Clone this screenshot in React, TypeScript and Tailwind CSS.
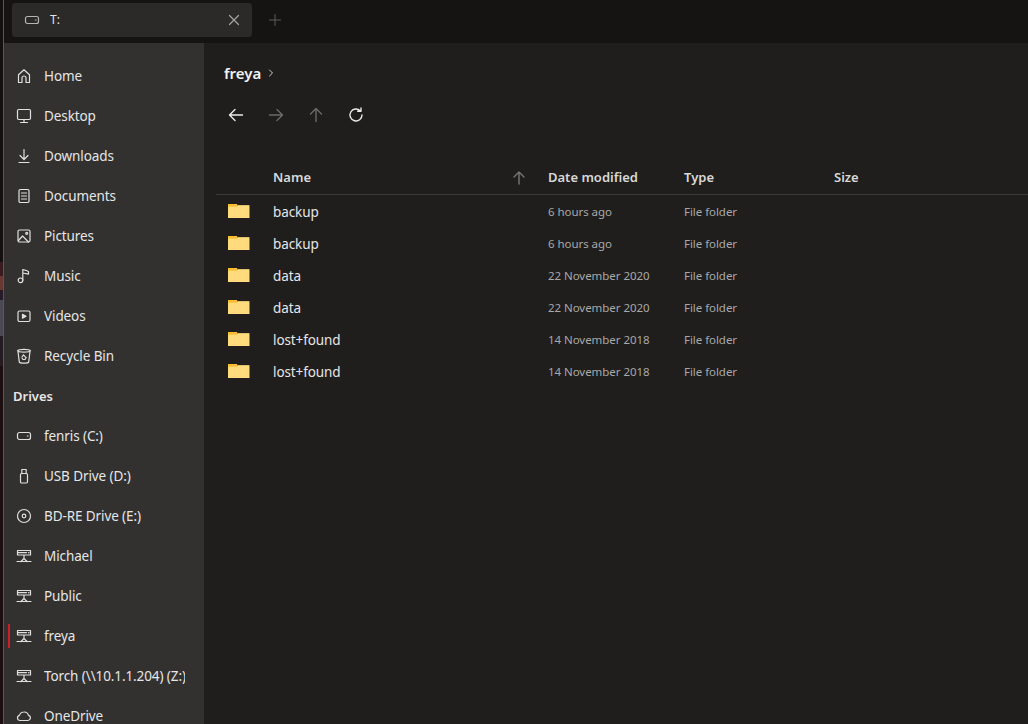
import React from "react";

const ic = { fill: "none", stroke: "currentColor", strokeWidth: 1.2, strokeLinecap: "round" as const, strokeLinejoin: "round" as const };
const S = ({ children }: { children: React.ReactNode }) => (
  <svg width="16" height="16" viewBox="0 0 16 16" {...ic}>{children}</svg>
);
const Home = () => <S><path d="M2.500 14.500V6.800L8 1.800l5.500 5v7.700h-3.500V10a2 2 0 0 0-4 0v4.500z" /></S>;
const Desktop = () => <S><rect x="1.500" y="1.500" width="13" height="10" rx="1.200" /><path d="M8 11.500v3M4.500 14.500h7" /></S>;
const Download = () => <S><path d="M8 1.500v9.500M4 7.500 8 11.500l4-4M3 14.500h10" /></S>;
const Doc = () => <S><rect x="3" y="1.500" width="10" height="13" rx="1.200" /><path d="M5.500 5h5M5.500 8h5M5.500 11h5" /></S>;
const Pic = () => <S><rect x="2" y="2" width="12" height="12" rx="1.500" /><path d="m2.500 12.500 4-4.500 6 6" /><circle cx="10.700" cy="5.300" r="1" /></S>;
const Music = () => <S><circle cx="4.500" cy="12.300" r="2.300" /><path d="M6.800 12.300V1.600c2 .3 4.700 1 5.700 2v2.500L6.800 5" /></S>;
const Video = () => <S><rect x="2" y="3" width="12" height="10.500" rx="1.500" /><path d="M6.500 6.300v3.900L10 8.200z" fill="currentColor" /></S>;
const Bin = () => <S><path d="M1.500 2.800c1-2 12-2 13 0-1 1.700-12 1.700-13 0zM2 3.500l1.300 10.500c.4 1.500 9 1.500 9.400 0L14 3.500" /><path d="M6 9l1.500-2.200L9.300 8.800M6 10l1 1.500h2l1.200-2" /></S>;
const Hdd = () => <S><rect x="1.500" y="4.500" width="13" height="7" rx="2" /><path d="M11.300 8h.8" /></S>;
const Usb = () => <S><rect x="4.500" y="5.500" width="7" height="9.500" rx="1.200" /><path d="M5.800 5.500V1.500h4.400v4" /></S>;
const Disc = () => <S><circle cx="8" cy="8" r="6.500" /><circle cx="8" cy="8" r="1.800" /></S>;
const Net = () => <S><path d="M1.500 2.500h13v4.500h-13zM1.500 4.700h9M8 7v3.500M1 13.500h14M5 13.500l3-3 3 3" /><path d="M12.500 4.700h.5" /></S>;
const Cloud = () => <S><path d="M4 12.500a2.600 2.600 0 0 1-.6-5.100A4.800 4.800 0 0 1 8 4a4.500 4.500 0 0 1 4.500 3.400 2.600 2.600 0 0 1-.5 5.100z" /></S>;
const Arrow = ({ d, className }: { d: string; className: string }) => (
  <svg width="16" height="16" viewBox="0 0 16 16" className={className} {...ic} strokeWidth={1.4}><path d={d} /></svg>
);
const Folder = () => (
  <svg width="22" height="14" viewBox="0 0 22 14" className="block">
    <path d="M0 0h9l1 1.200h12V14H0z" fill="#8f7a3f" />
    <path d="M0 2h21v12H0z" fill="#ffdb7d" />
    <path d="M9.500 1.200H21V3H9.500z" fill="#ffdb7d" />
    <path d="M0 0h9v2.600H0z" fill="#fbbd2d" />
  </svg>
);

const nav = [
  ["Home", Home], ["Desktop", Desktop], ["Downloads", Download], ["Documents", Doc],
  ["Pictures", Pic], ["Music", Music], ["Videos", Video], ["Recycle Bin", Bin],
] as const;
const drives = [
  ["fenris (C:)", Hdd], ["USB Drive (D:)", Usb], ["BD-RE Drive (E:)", Disc], ["Michael", Net],
  ["Public", Net], ["freya", Net], ["Torch (\\\\10.1.1.204) (Z:)", Net], ["OneDrive", Cloud],
] as const;
const rows = [
  ["backup", "6 hours ago"], ["backup", "6 hours ago"], ["data", "22 November 2020"],
  ["data", "22 November 2020"], ["lost+found", "14 November 2018"], ["lost+found", "14 November 2018"],
];
const Strip = () => (
  <div className="w-[3px] shrink-0 flex flex-col">
    <div className="h-[262px] bg-[#14100f]" />
    <div className="h-[14px] bg-[#3a1c20]" />
    <div className="h-[14px] bg-[#6a3832]" />
    <div className="h-[10px] bg-[#241a28]" />
    <div className="h-[36px] bg-[#4a4852]" />
    <div className="h-[30px] bg-[#241c22]" />
    <div className="flex-1 bg-[#1c0e10]" />
  </div>
);

const Item = ({ label, Icon, active }: { label: string; Icon: React.ComponentType; active?: boolean }) => (
  <div className="relative h-10 shrink-0 flex items-center pl-[12px] text-[13.5px] tracking-[-0.1px] text-[#e6e6e6]">
    {active && <span className="absolute left-[4px] top-[8px] h-6 w-[2px] bg-[#d01c2c]" />}
    <span className="text-[#e0e0e0] w-4 h-4 flex mr-[12px]"><Icon /></span>
    <span className="whitespace-nowrap overflow-hidden w-[141px]">{label}</span>
  </div>
);

export default function App() {
  return (
    <div className="w-[1028px] h-[724px] flex overflow-hidden bg-[#120c0c]" style={{ fontFamily: "'Noto Sans','Open Sans',sans-serif" }}>
      <Strip />
      <div className="w-px shrink-0 bg-[#c5263a]" />
      <div className="flex-1 flex flex-col min-w-0">
        <div className="h-[43px] shrink-0 bg-[#151413] flex items-start pl-[8px] pt-[3px]">
          <div className="w-[240px] h-[34px] rounded-[4px] bg-[#2b2a29] flex items-center pl-[12px] pr-[12px]">
            <span className="text-[#b5b5b5] w-4 h-4 flex"><Hdd /></span>
            <span className="ml-[10px] text-[12px] text-[#e4e4e4] flex-1">T:</span>
            <svg width="12" height="12" viewBox="0 0 12 12" className="text-[#a5a5a5]" {...ic}><path d="M1.500 1.500l9 9M10.500 1.500l-9 9" /></svg>
          </div>
          <svg width="12" height="12" viewBox="0 0 12 12" className="ml-[17px] mt-[11px] text-[#5d5d5d]" {...ic} strokeWidth={1}><path d="M6 .5v11M.5 6h11" /></svg>
        </div>
        <div className="flex-1 flex min-h-0">
          <div className="w-[200px] shrink-0 bg-[#323130] flex flex-col pt-[13px] overflow-hidden">
            {nav.map(([l, I]) => <Item key={l} label={l} Icon={I} />)}
            <div className="h-10 shrink-0 flex items-center pl-[9px] text-[13px] font-semibold text-[#e6e6e6] pt-px">Drives</div>
            {drives.map(([l, I]) => <Item key={l} label={l} Icon={I} active={l === "freya"} />)}
          </div>
          <div className="flex-1 bg-[#1f1e1d] min-w-0 pl-[12px]">
            <div className="flex items-center h-[16px] mt-[22px] pl-[8px] gap-[6px]">
              <span className="text-[15px] font-semibold text-[#f2f2f2]">freya</span>
              <svg width="8" height="10" viewBox="0 0 8 10" className="text-[#cfcfcf] -mt-px" {...ic} strokeWidth={1}><path d="M2.500 2 5.500 5 2.500 8" /></svg>
            </div>
            <div className="flex items-center gap-6 mt-[26px] pl-[12px] h-4">
              <Arrow className="text-[#ececec]" d="M14.500 8H1.500M7 2.500 1.500 8 7 13.500" />
              <Arrow className="text-[#6a6a6a]" d="M1.500 8h13M9 2.500 14.500 8 9 13.500" />
              <Arrow className="text-[#6a6a6a]" d="M8 14.500V1.500M2.500 7 8 1.500 13.500 7" />
              <Arrow className="text-[#ececec]" d="M14 8a6 6 0 1 1-1.800-4.300M13 1v3.300H9.700" />
            </div>
            <div className="flex items-center h-[36px] mt-[36px] pt-[2px] border-b border-[#3a3938] text-[13px] font-semibold text-[#d8d8d8]">
              <span className="w-[57px]" />
              <span className="w-[238px]">Name</span>
              <Arrow className="text-[#777777] mr-[21px]" d="M8 14V2M3 7l5-5 5 5" />
              <span className="w-[136px]">Date modified</span>
              <span className="w-[150px]">Type</span>
              <span>Size</span>
            </div>
            {rows.map(([n, d], i) => (
              <div key={i} className="flex items-center h-8 text-[11.5px] tracking-[-0.05px] text-[#a8a8a8]">
                <span className="w-[57px] pl-[12px] -mt-[1px]"><Folder /></span>
                <span className="w-[275px] text-[13.5px] tracking-[-0.1px] text-[#e6e6e6] pt-[3px]">{n}</span>
                <span className="w-[136px] pt-[2px]">{d}</span>
                <span className="pt-[2px]">File folder</span>
              </div>
            ))}
          </div>
        </div>
      </div>
    </div>
  );
}
